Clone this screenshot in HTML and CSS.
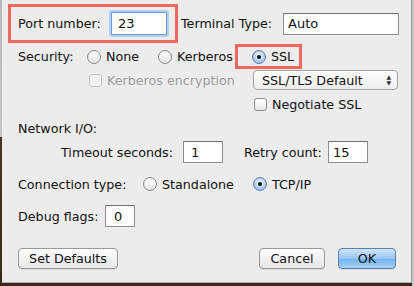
FILE: index.html
```html
<!DOCTYPE html>
<html lang="en">
<head>
  <meta charset="utf-8">
  <title>Connection Settings</title>
  <link rel="stylesheet" href="styles.css">
</head>
<body>
  <div class="desk">
    <div id="dialog">
      <div class="row row-port">
        <div class="mark mark-port">
          <span class="label">Port number:</span>
          <span class="field field-port focus">23</span>
        </div>
        <span class="label term-label">Terminal Type:</span>
        <span class="field field-term">Auto</span>
      </div>

      <div class="row row-sec">
        <span class="label sec-label">Security:</span>
        <span class="radio"></span><span class="opt opt-none">None</span>
        <span class="radio"></span><span class="opt opt-kerb">Kerberos</span>
        <div class="mark mark-ssl">
          <span class="radio on"></span><span class="opt">SSL</span>
        </div>
      </div>

      <div class="row row-enc">
        <span class="check off"></span><span class="opt dim enc-label">Kerberos encryption</span>
        <span class="select">SSL/TLS Default<span class="arrows">&#9650;<br>&#9660;</span></span>
      </div>

      <div class="row row-neg">
        <span class="check"></span><span class="opt">Negotiate SSL</span>
      </div>

      <div class="row row-net">
        <span class="label">Network I/O:</span>
      </div>

      <div class="row row-time">
        <span class="label time-label">Timeout seconds:</span>
        <span class="field field-time">1</span>
        <span class="label retry-label">Retry count:</span>
        <span class="field field-retry">15</span>
      </div>

      <div class="row row-conn">
        <span class="label conn-label">Connection type:</span>
        <span class="radio"></span><span class="opt opt-stand">Standalone</span>
        <span class="radio on"></span><span class="opt">TCP/IP</span>
      </div>

      <div class="row row-debug">
        <span class="label debug-label">Debug flags:</span>
        <span class="field field-debug">0</span>
      </div>

      <div class="row row-buttons">
        <button class="btn btn-defaults">Set Defaults</button>
        <button class="btn btn-cancel">Cancel</button>
        <button class="btn btn-ok">OK</button>
      </div>
    </div>
  </div>
</body>
</html>
```

FILE: styles.css
```css
body {
  margin: 0;
  background: #3b2a1b;
  font-family: "DejaVu Sans", "Liberation Sans", sans-serif;
  font-size: 12.7px;
  color: #111;
}

.desk {
  width: 414px;
  height: 286px;
  background:
    linear-gradient(to right, transparent 412px, #c4c4c4 412px),
    linear-gradient(to bottom, #b9b9b9 0, #c6c6c6 137px, #4a3320 137px, #3b2a1b 286px);
  padding-left: 2px;
  box-sizing: border-box;
}

#dialog {
  width: 410px;
  height: 283px;
  background: #ececec;
  border-right: 1px solid #9c9c9c;
  border-bottom: 1px solid #b0b0b0;
  box-sizing: border-box;
  padding-top: 4px;
}

.row {
  display: flex;
  align-items: center;
}

.label {
  white-space: nowrap;
}

.field {
  background: #fff;
  border: 1px solid #8e8e8e;
  border-top-color: #6f6f6f;
  box-sizing: border-box;
  padding-left: 4px;
  font-size: 13px;
  display: flex;
  align-items: center;
}

.focus {
  border: 1px solid #6b9ad8;
  box-shadow: 0 0 0 2px #b3cff0;
  border-radius: 1px;
}

.mark {
  border: 3px solid #f2685b;
  box-sizing: border-box;
  display: flex;
  align-items: center;
}

/* row 1 */
.row-port {
  height: 39px;
}

.mark-port {
  margin-left: 6px;
  width: 170px;
  height: 39px;
  padding-left: 7px;
}

.mark-port .label {
  width: 93px;
}

.field-port {
  width: 56px;
  height: 23px;
  padding-left: 6px;
}

.term-label {
  margin-left: 3px;
  width: 102px;
}

.field-term {
  width: 116px;
  height: 22px;
}

/* radios and checks */
.radio {
  width: 14px;
  height: 14px;
  border-radius: 50%;
  border: 1px solid #8a8a8a;
  box-sizing: border-box;
  background: linear-gradient(#ffffff, #e4e4e4);
  box-shadow: inset 0 1px 1px rgba(0, 0, 0, 0.08);
  position: relative;
  flex: none;
}

.radio.on {
  border-color: #5c79a6;
  background: radial-gradient(circle at 50% 30%, #eaf3fd, #a9c9ee 70%, #86b0e3);
}

.radio.on::after {
  content: "";
  position: absolute;
  left: 4px;
  top: 4px;
  width: 4px;
  height: 4px;
  border-radius: 50%;
  background: #111;
}

.check {
  width: 13px;
  height: 13px;
  border: 1px solid #8a8a8a;
  border-radius: 3px;
  box-sizing: border-box;
  background: linear-gradient(#ffffff, #e8e8e8);
  flex: none;
}

.check.off {
  border-color: #c2c2c2;
  background: #f1f1f1;
}

.opt {
  margin-left: 5px;
  white-space: nowrap;
}

.dim {
  color: #9c9c9c;
}

/* row 2 */
.row-sec {
  height: 27px;
}

.sec-label {
  margin-left: 16px;
  width: 69px;
}

.opt-none {
  width: 52px;
}

.opt-kerb {
  width: 58px;
}

.mark-ssl {
  width: 67px;
  height: 25px;
  padding-left: 14px;
}

/* row 3 */
.row-enc {
  height: 20px;
}

.row-enc .check {
  margin-left: 87px;
}

.enc-label {
  width: 146px;
}

.select {
  width: 145px;
  height: 20px;
  box-sizing: border-box;
  border: 1px solid #a3a3a3;
  border-radius: 4px;
  background: linear-gradient(#ffffff, #ededed);
  padding-left: 8px;
  display: flex;
  align-items: center;
  justify-content: space-between;
}

.arrows {
  font-size: 6px;
  line-height: 6px;
  color: #333;
  margin-right: 6px;
  text-align: center;
}

/* row 4 */
.row-neg {
  height: 20px;
  margin-top: 4px;
}

.row-neg .check {
  margin-left: 252px;
}

/* row 5 */
.row-net {
  height: 20px;
  margin-top: 4px;
}

.row-net .label {
  margin-left: 16px;
}

/* row 6 */
.row-time {
  height: 22px;
  margin-top: 3px;
}

.time-label {
  margin-left: 59px;
  width: 122px;
}

.field-time {
  width: 40px;
  height: 22px;
  padding-left: 7px;
}

.retry-label {
  margin-left: 21px;
  width: 84px;
}

.field-retry {
  width: 40px;
  height: 22px;
}

/* row 7 */
.row-conn {
  height: 20px;
  margin-top: 11px;
}

.conn-label {
  margin-left: 16px;
  width: 125px;
}

.opt-stand {
  width: 91px;
}

/* row 8 */
.row-debug {
  height: 22px;
  margin-top: 11px;
}

.debug-label {
  margin-left: 16px;
  width: 87px;
}

.field-debug {
  width: 30px;
  height: 22px;
  padding-left: 8px;
}

/* buttons */
.row-buttons {
  height: 21px;
  margin-top: 21px;
}

.btn {
  font-family: inherit;
  font-size: 12.7px;
  color: #111;
  height: 21px;
  border: 1px solid #979797;
  border-radius: 4px;
  background: linear-gradient(#ffffff, #f1f1f1 50%, #e6e6e6);
  box-shadow: 0 1px 0 rgba(0, 0, 0, 0.08);
  padding: 0;
}

.btn-defaults {
  margin-left: 16px;
  width: 100px;
}

.btn-cancel {
  margin-left: 141px;
  width: 66px;
}

.btn-ok {
  margin-left: 13px;
  width: 58px;
  border-color: #5b7fb5;
  background: linear-gradient(#cfe4fb, #99c6f3 50%, #6fb0ef 51%, #a8d4f8);
}
```
